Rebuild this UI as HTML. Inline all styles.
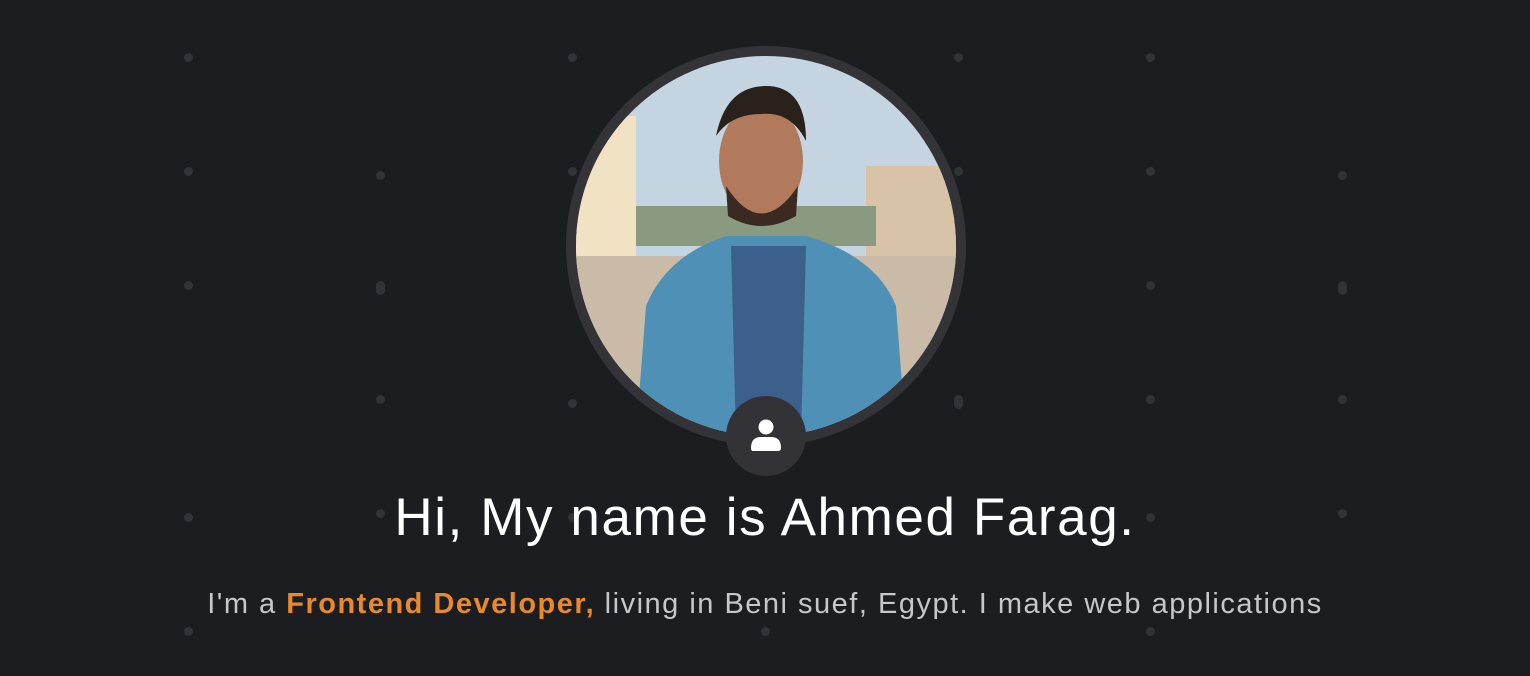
<!DOCTYPE html>
<html><head><meta charset="utf-8"><style>
html,body{margin:0;padding:0}
body{width:1530px;height:676px;background:#1c1d21;position:relative;overflow:hidden;font-family:"Liberation Sans",sans-serif}
.d{position:absolute;width:9px;height:9px;border-radius:5px;background:#323338}
.p{height:14px}
.av{position:absolute;left:566px;top:46px;width:400px;height:400px;border-radius:50%;background:#333338}
.ph{position:absolute;left:10px;top:10px;width:380px;height:380px;border-radius:50%;overflow:hidden}
.badge{position:absolute;left:726px;top:396px;width:80px;height:80px;border-radius:50%;background:#333236}
h1{position:absolute;left:0;right:0;top:487px;margin:0;text-align:center;color:#fff;font-weight:normal;font-size:53px;letter-spacing:1.6px}
p{position:absolute;left:0;right:0;top:588px;margin:0;text-align:center;color:#c6c6cb;font-size:29px;letter-spacing:1.5px}
p b{color:#e98a2a}
</style></head><body>
<div class="d" style="left:184px;top:53px"></div><div class="d" style="left:568px;top:53px"></div><div class="d" style="left:954px;top:53px"></div><div class="d" style="left:1146px;top:53px"></div>
<div class="d" style="left:184px;top:167px"></div><div class="d" style="left:376px;top:171px"></div><div class="d" style="left:568px;top:167px"></div><div class="d" style="left:954px;top:167px"></div><div class="d" style="left:1146px;top:167px"></div><div class="d" style="left:1338px;top:171px"></div>
<div class="d" style="left:184px;top:281px"></div><div class="d p" style="left:376px;top:281px"></div><div class="d" style="left:1146px;top:281px"></div><div class="d p" style="left:1338px;top:281px"></div>
<div class="d" style="left:376px;top:395px"></div><div class="d" style="left:568px;top:399px"></div><div class="d p" style="left:954px;top:395px"></div><div class="d" style="left:1146px;top:395px"></div><div class="d" style="left:1338px;top:395px"></div>
<div class="d" style="left:184px;top:513px"></div><div class="d" style="left:376px;top:509px"></div><div class="d" style="left:568px;top:513px"></div><div class="d" style="left:1146px;top:513px"></div><div class="d" style="left:1338px;top:509px"></div>
<div class="d" style="left:184px;top:627px"></div><div class="d" style="left:761px;top:627px"></div><div class="d" style="left:1146px;top:627px"></div>
<div class="av"><div class="ph"><svg width="380" height="380" viewBox="0 0 380 380">
<rect width="380" height="380" fill="#c4d4e0"/>
<rect x="0" y="60" width="60" height="200" fill="#f2e2c4"/>
<rect x="290" y="110" width="90" height="100" fill="#d8c3a8"/>
<rect x="0" y="200" width="380" height="180" fill="#c9bba8"/>
<rect x="60" y="150" width="240" height="40" fill="#8a9a80"/>
<path d="M60 380 L70 250 Q90 200 150 180 L230 180 Q300 200 320 250 L330 380Z" fill="#4f90b6"/>
<path d="M155 190 L230 190 L225 380 L160 380Z" fill="#3d5f8c"/>
<ellipse cx="185" cy="105" rx="42" ry="58" fill="#b27a5c"/>
<path d="M140 80 Q150 30 190 30 Q230 30 230 85 Q215 55 185 58 Q155 58 140 80Z" fill="#2a211d"/>
<path d="M150 130 Q185 185 222 130 L220 160 Q185 180 152 160Z" fill="#3a2a22"/>
</svg></div></div>
<div class="badge"><svg style="position:absolute;left:25px;top:22px" width="30" height="34" viewBox="0 0 30 34"><circle cx="15" cy="9" r="7.5" fill="#fff"/><path d="M2 33 Q0 33 0 30 Q0 19 10 19 L20 19 Q30 19 30 30 Q30 33 27 33Z" fill="#fff"/></svg></div>
<h1>Hi, My name is Ahmed Farag.</h1>
<p>I'm a <b>Frontend Developer,</b> living in Beni suef, Egypt. I make web applications</p>
</body></html>
